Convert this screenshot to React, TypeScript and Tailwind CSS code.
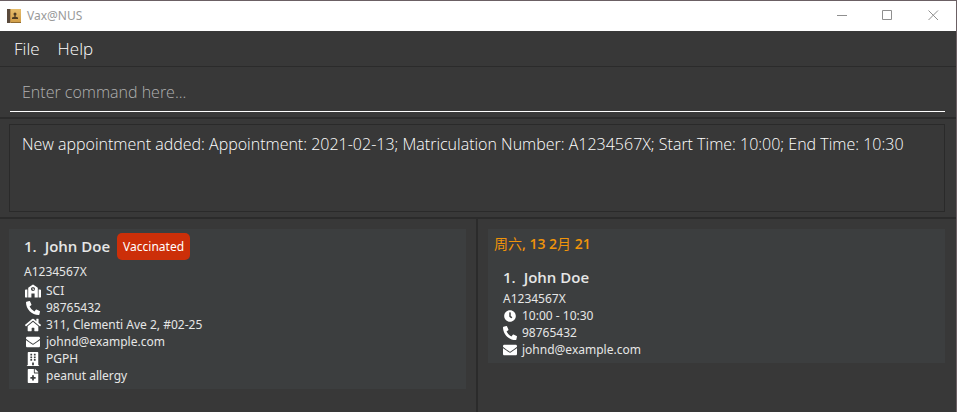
import type { ReactNode } from "react";
import type { IconType } from "react-icons";
import {
  FaBuilding,
  FaClock,
  FaEnvelope,
  FaFileMedical,
  FaHome,
  FaPhoneAlt,
  FaSchool,
} from "react-icons/fa";

function AddressBookIcon() {
  return (
    <svg width="14" height="14" viewBox="0 0 14 14" aria-hidden="true">
      <defs>
        <linearGradient id="cover" x1="0" y1="0" x2="0" y2="1">
          <stop offset="0" stopColor="#e6bd6c" />
          <stop offset="1" stopColor="#d09c45" />
        </linearGradient>
      </defs>
      <rect width="14" height="14" fill="url(#cover)" />
      <rect width="3" height="14" fill="#5a4a3c" />
      <rect x="3" width="1" height="14" fill="#b98d4b" />
      <rect x="4" y="13" width="10" height="1" fill="#8f6a30" />
      <circle cx="8" cy="5" r="1.5" fill="#4d3a22" />
      <path d="M7.400 6h1.200v1.800l2.400.7V10H5V8.500l2.400-.7z" fill="#4d3a22" />
    </svg>
  );
}

function WindowButton({ label, children }: { label: string; children: ReactNode }) {
  return (
    <button type="button" aria-label={label} className="flex h-full w-[46px] items-center justify-center pb-px">
      <svg width="11" height="11" viewBox="0 0 11 11" fill="none" stroke="#8f8f8f" aria-hidden="true">
        {children}
      </svg>
    </button>
  );
}

function TitleBar() {
  return (
    <header className="flex h-[30px] items-center bg-white pl-[7px]">
      <AddressBookIcon />
      <h1 className="ml-1.5 font-['Noto_Sans',sans-serif] text-[12px] text-[#999999]">Vax@NUS</h1>
      <div className="ml-auto flex h-full">
        <WindowButton label="Minimize">
          <path d="M1 5.500h10" />
        </WindowButton>
        <WindowButton label="Maximize">
          <path d="M.5.5h9v9h-9z" />
        </WindowButton>
        <WindowButton label="Close">
          <path d="M.5.5l9.500 9.500M10 .5L.5 10" />
        </WindowButton>
      </div>
    </header>
  );
}

type DetailProps = { icon: IconType; size?: number; wide?: boolean; children: ReactNode };

function Detail({ icon: Icon, size = 14, wide = false, children }: DetailProps) {
  return (
    <li className="flex h-[17px] items-center gap-[5px]">
      <span className={`flex justify-center text-white ${wide ? "w-[17px]" : "w-3.5"}`}>
        <Icon size={size} aria-hidden="true" />
      </span>
      {children}
    </li>
  );
}

function PersonName({ index, name }: { index: number; name: string }) {
  return (
    <h2 className="flex gap-2 font-['Open_Sans',sans-serif] text-[15px] font-semibold text-[#e6e6e6]">
      <span>{index}.</span>
      {name}
    </h2>
  );
}

export default function App() {
  return (
    <div className="h-screen bg-[#6b6064] pt-px pr-px font-['Open_Sans','Noto_Sans_CJK_SC',sans-serif]">
      <div className="flex h-full flex-col overflow-hidden bg-[#383838]">
        <TitleBar />
        <nav className="flex h-9 items-center gap-[18px] border-b border-[#2b2b2b] px-3.5 text-[17px] font-light text-white">
          <button type="button">File</button>
          <button type="button">Help</button>
        </nav>

        <div className="border-b-2 border-[#2b2b2b] pt-1.5 pr-[11px] pb-[5px] pl-2.5">
          <input
            type="text"
            aria-label="Command"
            placeholder="Enter command here..."
            className="block h-[39px] w-full border-b border-white bg-transparent px-3 text-[16px] font-light text-white outline-none placeholder:text-[#b0b0b0]"
          />
        </div>

        <div className="border-b-2 border-[#2b2b2b] pt-[5px] pr-[11px] pb-[5px] pl-[9px]">
          <output className="block h-[88px] border border-[#2a2a2a] px-3 pt-[7px] text-[16px] leading-6 font-light whitespace-nowrap text-white">
            New appointment added: Appointment: 2021-02-13; Matriculation Number: A1234567X; Start Time: 10:00; End
            Time: 10:30
          </output>
        </div>

        <main className="grid flex-1 grid-cols-2 font-['Noto_Sans','Noto_Sans_CJK_SC',sans-serif] text-[12px] text-[#e6e6e6]">
          <section className="border-r-2 border-[#2b2b2b] pt-2.5 pr-2.5 pl-[9px]">
            <article className="bg-[#3c3e3f] px-[15px] pt-1 pb-[5px]">
              <div className="flex h-[27px] items-center gap-[7px]">
                <PersonName index={1} name="John Doe" />
                <span className="rounded-[5px] bg-[#cc2f09] px-1.5 leading-[27px] text-white">Vaccinated</span>
              </div>
              <p className="mt-[3px] mb-0.5 leading-[17px]">A1234567X</p>
              <ul>
                <Detail wide icon={FaSchool} size={16}>
                  SCI
                </Detail>
                <Detail wide icon={FaPhoneAlt}>
                  98765432
                </Detail>
                <Detail wide icon={FaHome} size={16}>
                  311, Clementi Ave 2, #02-25
                </Detail>
                <Detail wide icon={FaEnvelope}>
                  johnd@example.com
                </Detail>
                <Detail wide icon={FaBuilding}>
                  PGPH
                </Detail>
                <Detail wide icon={FaFileMedical}>
                  peanut allergy
                </Detail>
              </ul>
            </article>
          </section>
          <section className="pt-2.5 pr-[11px] pl-2.5">
            <article className="bg-[#3c3e3f] px-1.5 py-[5px]">
              <h2 className="font-['Open_Sans','Noto_Sans_CJK_SC',sans-serif] text-[14px] leading-5 font-semibold text-[#f0940a]">
                <span className="font-normal">周六</span>, 13 2<span className="font-normal">月</span> 21
              </h2>
              <div className="pt-[11px] pl-[9px]">
                <div className="flex h-[25px] items-center">
                  <PersonName index={1} name="John Doe" />
                </div>
                <p className="leading-[17px]">A1234567X</p>
                <ul>
                  <Detail icon={FaClock} size={12}>
                    10:00 - 10:30
                  </Detail>
                  <Detail icon={FaPhoneAlt}>98765432</Detail>
                  <Detail icon={FaEnvelope}>johnd@example.com</Detail>
                </ul>
              </div>
            </article>
          </section>
        </main>
      </div>
    </div>
  );
}
